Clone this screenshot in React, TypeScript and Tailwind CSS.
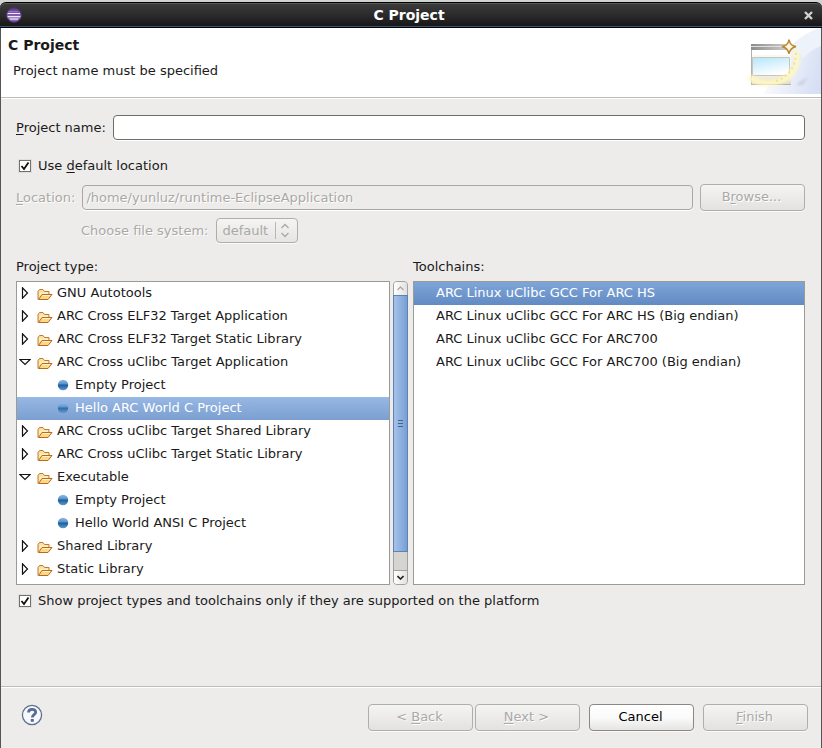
import { useState, type ReactNode } from "react";

type TreeNode = { label: string; open?: boolean; children?: string[] };

const projectTypes: TreeNode[] = [
  { label: "GNU Autotools" },
  { label: "ARC Cross ELF32 Target Application" },
  { label: "ARC Cross ELF32 Target Static Library" },
  { label: "ARC Cross uClibc Target Application", open: true, children: ["Empty Project", "Hello ARC World C Project"] },
  { label: "ARC Cross uClibc Target Shared Library" },
  { label: "ARC Cross uClibc Target Static Library" },
  { label: "Executable", open: true, children: ["Empty Project", "Hello World ANSI C Project"] },
  { label: "Shared Library" },
  { label: "Static Library" },
];

const toolchains = [
  "ARC Linux uClibc GCC For ARC HS",
  "ARC Linux uClibc GCC For ARC HS (Big endian)",
  "ARC Linux uClibc GCC For ARC700",
  "ARC Linux uClibc GCC For ARC700 (Big endian)",
];

const disabledText = "text-[#aaa9a6] [text-shadow:1px_1px_0_#fff]";

function EclipseIcon() {
  return (
    <svg width="16" height="16" viewBox="0 0 16 16" aria-hidden="true">
      <defs>
        <linearGradient id="orb" x1="0" y1="0" x2="0" y2="1">
          <stop offset="0" stopColor="#4f3480" />
          <stop offset="0.35" stopColor="#7b5aa8" />
          <stop offset="0.7" stopColor="#a58bc8" />
          <stop offset="1" stopColor="#6d4a9c" />
        </linearGradient>
        <clipPath id="orbClip">
          <circle cx="8" cy="8" r="7.5" />
        </clipPath>
      </defs>
      <circle cx="8" cy="8" r="7.5" fill="url(#orb)" />
      <g clipPath="url(#orbClip)">
        <path d="M2 4.500h10" stroke="#8f77ba" />
        <path d="M1 6.500h13M1 9.500h14" stroke="#efe6f8" />
        <path d="M2 8h12" stroke="#6d5199" />
        <path d="M4 12h8" stroke="#c9b6e2" strokeWidth="2" />
      </g>
      <circle cx="8" cy="8" r="7.200" fill="none" stroke="#4a2b76" strokeWidth="0.800" />
    </svg>
  );
}

function WizardBanner() {
  return (
    <svg width="75" height="66" viewBox="0 0 75 66" aria-hidden="true">
      <defs>
        <linearGradient id="sky" x1="0" y1="0.3" x2="1" y2="0.6">
          <stop offset="0" stopColor="#fff" />
          <stop offset="1" stopColor="#cfdaf2" />
        </linearGradient>
        <linearGradient id="bar" x1="0" y1="0" x2="1" y2="0">
          <stop offset="0" stopColor="#8c8c8c" />
          <stop offset="1" stopColor="#d2d2d2" />
        </linearGradient>
        <linearGradient id="pane" x1="0.1" y1="0" x2="0.5" y2="1">
          <stop offset="0" stopColor="#b8e6fc" />
          <stop offset="1" stopColor="#fff" />
        </linearGradient>
        <linearGradient id="base" x1="0" y1="0" x2="0" y2="1">
          <stop offset="0" stopColor="#f1eee0" />
          <stop offset="1" stopColor="#e0dccc" />
        </linearGradient>
        <filter id="soft" x="-20%" y="-20%" width="140%" height="140%">
          <feGaussianBlur stdDeviation="1.600" />
        </filter>
      </defs>
      <path d="M75 0C57 6 46 14 36 30L18 66H75Z" fill="url(#sky)" opacity="0.85" />
      <path d="M75 0C63 3 54 9 48 18L57 30C63 24 69 20 75 18Z" fill="#eef2fb" />
      <path d="M6 57h44l12-8-6 8z" fill="#9c9da6" opacity="0.4" filter="url(#soft)" />
      <path d="M5 16h40v40H5z" fill="#f7f7f5" />
      <path d="M5 16h40v6H5z" fill="url(#bar)" />
      <path d="M5 18.500h40" stroke="#dedede" />
      <path d="M5.500 22v34" stroke="#b4b3ab" />
      <path d="M6 22h39v5H6z" fill="#fff" />
      <path d="M6 48h39v8H6z" fill="url(#base)" />
      <path d="M5 56.500h40" stroke="#b5b1a2" />
      <path d="M6.500 29.500h37v18H6.500z" fill="url(#pane)" stroke="#c9c6b8" />
      <path d="M3 49C13 58 34 56 43 48C51 40 53 31 49 22" fill="none" stroke="#fff8c4" strokeWidth="6" opacity="0.9" filter="url(#soft)" />
      <path d="M30 53C42 49 50 39 50 24" fill="none" stroke="#f3da83" strokeWidth="2" strokeDasharray="2 3" opacity="0.75" />
      <path d="M43 11.500Q42 18 36 18.500Q42 20 43 26Q44 20 50 18.500Q44 18 43 11.500Z" fill="#fdf6e0" stroke="#b8862c" strokeWidth="1.400" />
    </svg>
  );
}

function FolderIcon() {
  return (
    <svg width="16" height="14" viewBox="0 0 16 14" className="mt-1 shrink-0" aria-hidden="true">
      <path d="M1 11.500V3.500L2.500 1.500H6L7.500 3.500H12V6" fill="#f9dfa4" stroke="#bd7c32" />
      <path d="M2.500 4.500h8.500v2H5L2.500 9z" fill="#fff0bd" />
      <path d="M1.500 11.500L5 6.500H15L11 11.500Z" fill="#fcd886" stroke="#b76b21" />
      <path d="M5.500 7.500H13" stroke="#fff3c9" />
    </svg>
  );
}

function Bullet({ dim }: { dim: boolean }) {
  return (
    <svg width="12" height="12" viewBox="0 0 12 12" className="shrink-0" opacity={dim ? 0.8 : 1} aria-hidden="true">
      <defs>
        <linearGradient id="ball" x1="0" y1="0" x2="0" y2="1">
          <stop offset="0" stopColor="#8fbbe2" />
          <stop offset="0.4" stopColor="#5792c8" />
          <stop offset="0.5" stopColor="#1c5c9c" />
          <stop offset="1" stopColor="#5c9bd0" />
        </linearGradient>
      </defs>
      <circle cx="6" cy="6" r="5.2" fill="url(#ball)" />
    </svg>
  );
}

function Expander({ open }: { open: boolean }) {
  return (
    <svg width="12" height="12" viewBox="0 0 12 12" className="shrink-0" aria-hidden="true">
      <path d={open ? "M0.800 3.500H11.200L6 8.500Z" : "M3.500 0.800V11.200L8.500 6Z"} fill="#fff" stroke="#111" strokeWidth="1.200" />
    </svg>
  );
}

function CheckRow({ id, children }: { id: string; children: ReactNode }) {
  return (
    <div className="flex h-5 items-center gap-[7px] pl-[3px]">
      <span className="grid shrink-0">
        <input
          id={id}
          type="checkbox"
          defaultChecked
          className="peer col-start-1 row-start-1 size-3 appearance-none border border-[#73716c] bg-white outline outline-[#e0dfdc]"
        />
        <svg width="12" height="12" viewBox="0 0 12 12" className="pointer-events-none col-start-1 row-start-1 opacity-0 peer-checked:opacity-100" aria-hidden="true">
          <path d="M2.500 6L5 9L9.500 2.500" fill="none" stroke="#111" strokeWidth="1.800" />
        </svg>
      </span>
      <label htmlFor={id}>{children}</label>
    </div>
  );
}

function Button({ disabled, children }: { disabled?: boolean; children: ReactNode }) {
  const look = disabled
    ? `border-[#b0aeab] bg-linear-to-b from-[#f4f4f3] via-[#ecebea] to-[#e3e2e0] ${disabledText}`
    : "border-[#8a8884] bg-linear-to-b from-white via-[#fafafa] to-[#e6e5e3] text-black";
  return (
    <button
      type="button"
      disabled={disabled}
      className={`h-[27px] w-[105px] shrink-0 rounded-[4px] border pr-0.5 pb-0.5 shadow-[0_1px_0_#fafafa] ${look}`}
    >
      {children}
    </button>
  );
}

function Scrollbar() {
  return (
    <div className="flex w-[15px] shrink-0 flex-col rounded-[4px] border border-[#a3a19d] bg-[#d5d4d1]" role="presentation">
      <button type="button" aria-label="Scroll up" className="grid h-[13px] shrink-0 place-items-center rounded-t-[3px] bg-linear-to-r from-white to-[#e2e1df]">
        <svg width="7" height="5" viewBox="0 0 7 5" aria-hidden="true">
          <path d="M0.500 4L3.500 1L6.500 4" fill="none" stroke="#aaa" strokeWidth="1.300" />
        </svg>
      </button>
      <div className="-mx-px grid flex-1 place-items-center border border-[#5d82b4] bg-linear-to-r from-[#a5c2e8] via-[#8fb1e0] to-[#779fd4]">
        <svg width="5" height="8" viewBox="0 0 5 8" aria-hidden="true">
          <path d="M0 0.500h5M0 3.500h5M0 6.500h5" stroke="#45638e" />
        </svg>
      </div>
      <div className="h-[18px] shrink-0" />
      <button type="button" aria-label="Scroll down" className="grid h-3.5 shrink-0 place-items-center rounded-b-[3px] border-t border-[#a3a19d] bg-linear-to-r from-white to-[#e2e1df]">
        <svg width="7" height="5" viewBox="0 0 7 5" aria-hidden="true">
          <path d="M0.500 1L3.500 4L6.500 1" fill="none" stroke="#222" strokeWidth="1.600" />
        </svg>
      </button>
    </div>
  );
}

export default function App() {
  const [selected, setSelected] = useState("3/1");
  const [toolchain, setToolchain] = useState(0);

  return (
    <div className="flex min-h-screen flex-col bg-[#cfd4cf] pt-0.5 font-['DejaVu_Sans',sans-serif] text-[13px] leading-5 text-[#1a1a1a]">
      <header className="flex h-[26px] items-center rounded-t-[6px] border-t border-b border-black bg-linear-to-b from-[#3c3c3c] via-[#2b2b2b] to-[#161616] px-1.5 text-white shadow-[inset_0_1px_0_#5a5a5a,inset_0_-1px_0_#3c5676]">
        <EclipseIcon />
        <h1 className="flex-1 pr-1 text-center text-[14px] font-bold">C Project</h1>
        <button type="button" aria-label="Close" className="grid size-4 place-items-center">
          <svg width="9" height="9" viewBox="0 0 9 9" aria-hidden="true">
            <path d="M1 1L8 8M8 1L1 8" stroke="#d0d0ce" strokeWidth="2.400" />
          </svg>
        </button>
      </header>

      <main className="flex flex-1 flex-col border-x border-[#555] bg-[#edeceb]">
        <div className="flex h-[70px] justify-between border-b border-[#bdbcb9] bg-white">
          <div className="pt-[7px] pl-[7px]">
            <h2 className="text-[14px] font-bold">C Project</h2>
            <p className="pt-1.5 pl-[5px]">Project name must be specified</p>
          </div>
          <WizardBanner />
        </div>

        <form className="flex flex-1 flex-col border-t border-white" onSubmit={(e) => e.preventDefault()}>
          <div className="flex flex-1 flex-col pt-4 pr-4 pl-[15px]">
            <div className="flex items-center gap-[7px]">
              <label htmlFor="name"><u className="underline-offset-2">P</u>roject name:</label>
              <input id="name" type="text" className="h-[25px] min-w-0 flex-1 rounded-[4px] border border-[#6f6d69] bg-white px-1 shadow-[0_1px_0_#fff] outline-none" />
            </div>

            <div className="pt-4">
              <CheckRow id="default-location">Use <u className="underline-offset-2">d</u>efault location</CheckRow>
            </div>

            <div className="flex items-center gap-[7px] pt-2">
              <label htmlFor="location" className={disabledText}><u className="underline-offset-2">L</u>ocation:</label>
              <input
                id="location"
                type="text"
                disabled
                defaultValue="/home/yunluz/runtime-EclipseApplication"
                className={`h-[25px] min-w-0 flex-1 rounded-[4px] border border-[#a9a7a3] bg-[#edeceb] px-[3px] shadow-[0_1px_0_#fff] ${disabledText}`}
              />
              <Button disabled>B<u className="underline-offset-2">r</u>owse...</Button>
            </div>

            <div className={`flex items-center gap-2 pt-[7px] pl-[65px] ${disabledText}`}>
              <label htmlFor="fs">Choose file system:</label>
              <span className="grid w-[82px] items-center">
                <select
                  id="fs"
                  disabled
                  className="col-start-1 row-start-1 h-[25px] appearance-none rounded-[4px] border border-[#b0aeab] bg-linear-to-b from-[#f4f4f3] to-[#e6e5e3] pl-[5px] opacity-100 shadow-[0_1px_0_#fafafa]"
                >
                  <option>default</option>
                </select>
                <svg width="19" height="17" viewBox="0 0 19 17" className="pointer-events-none col-start-1 row-start-1 mr-1 justify-self-end" aria-hidden="true">
                  <path d="M0.500 0v17" stroke="#b9b7b4" />
                  <path d="M6.500 6L10 2.500L13.500 6M6.500 11L10 14.500L13.500 11" fill="none" stroke="#aaa9a6" strokeWidth="1.300" />
                </svg>
              </span>
            </div>

            <div className="grid grid-cols-2 gap-x-[5px] pt-3.5">
              <section>
                <h3 id="types" className="pb-1">Project type:</h3>
                <div className="flex h-[304px] gap-[3px]">
                  <ul role="tree" aria-labelledby="types" className="min-w-0 flex-1 overflow-hidden border border-[#9c9a96] bg-white">
                    {projectTypes.map((node, i) => (
                      <li key={node.label} role="treeitem" aria-expanded={!!node.open} aria-selected={false}>
                        <div className="flex h-[23px] items-center pb-0.5 pl-0.5">
                          <Expander open={!!node.open} />
                          <span className="w-1.5 shrink-0" />
                          <FolderIcon />
                          <span className="pl-1">{node.label}</span>
                        </div>
                        {node.children && (
                          <ul role="group">
                            {node.children.map((child, j) => {
                              const key = `${i}/${j}`;
                              const active = key === selected;
                              return (
                                <li
                                  key={key}
                                  role="treeitem"
                                  aria-selected={active}
                                  onClick={() => setSelected(key)}
                                  className={`flex h-[23px] items-center gap-1.5 pb-0.5 pl-10 ${active ? "bg-linear-to-b from-[#98b8e5] to-[#7a9fd0] text-white" : ""}`}
                                >
                                  <Bullet dim={active} />
                                  {child}
                                </li>
                              );
                            })}
                          </ul>
                        )}
                      </li>
                    ))}
                  </ul>
                  <Scrollbar />
                </div>
              </section>

              <section>
                <h3 id="chains" className="pb-1">Toolchains:</h3>
                <ul role="listbox" aria-labelledby="chains" className="h-[304px] border border-[#9c9a96] bg-white">
                  {toolchains.map((name, i) => (
                    <li
                      key={name}
                      role="option"
                      aria-selected={i === toolchain}
                      onClick={() => setToolchain(i)}
                      className={`flex h-[23px] items-center pb-0.5 pl-[22px] ${i === toolchain ? "bg-linear-to-b from-[#7fa5d8] to-[#628bc3] text-white" : ""}`}
                    >
                      {name}
                    </li>
                  ))}
                </ul>
              </section>
            </div>

            <div className="pt-1.5">
              <CheckRow id="supported">Show project types and toolchains only if they are supported on the platform</CheckRow>
            </div>
          </div>

          <footer className="flex items-start justify-between border-t border-[#bdbcb9] pt-[17px] pr-[13px] pb-[17px] pl-5 shadow-[inset_0_1px_0_#fff]">
            <button type="button" aria-label="Help">
              <svg width="22" height="22" viewBox="0 0 22 22" aria-hidden="true">
                <circle cx="11" cy="11" r="9.600" fill="#f6f8fb" stroke="#5c7293" strokeWidth="1.300" />
                <path d="M7.500 8.500C7.500 4.300 14.700 4.300 14.700 8.200C14.700 10.700 11.300 10.700 11.300 13.500" fill="none" stroke="#566d93" strokeWidth="2.800" />
                <path d="M9.800 15h3v2.800H9.800z" fill="#566d93" />
              </svg>
            </button>
            <div className="flex gap-[9px]">
              <div className="flex gap-0.5">
                <Button disabled>&lt; <u className="underline-offset-2">B</u>ack</Button>
                <Button disabled><u className="underline-offset-2">N</u>ext &gt;</Button>
              </div>
              <Button>Cancel</Button>
              <Button disabled><u className="underline-offset-2">F</u>inish</Button>
            </div>
          </footer>
        </form>
      </main>
    </div>
  );
}
